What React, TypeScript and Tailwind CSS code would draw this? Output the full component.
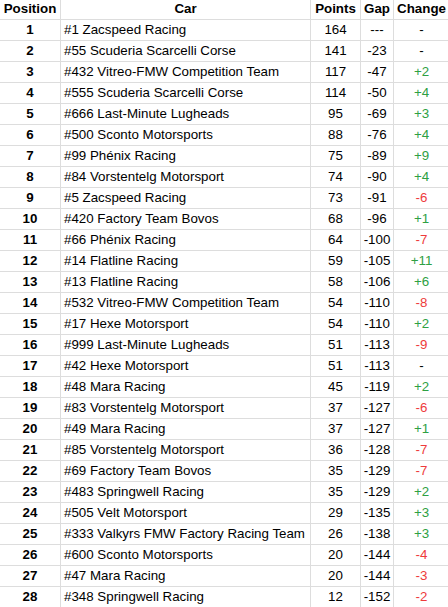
import React from 'react'

type Row = [number, string, number, string, string]

const rows: Row[] = [
  [1, '#1 Zacspeed Racing', 164, '---', '-'],
  [2, '#55 Scuderia Scarcelli Corse', 141, '-23', '-'],
  [3, '#432 Vitreo-FMW Competition Team', 117, '-47', '+2'],
  [4, '#555 Scuderia Scarcelli Corse', 114, '-50', '+4'],
  [5, '#666 Last-Minute Lugheads', 95, '-69', '+3'],
  [6, '#500 Sconto Motorsports', 88, '-76', '+4'],
  [7, '#99 Phénix Racing', 75, '-89', '+9'],
  [8, '#84 Vorstentelg Motorsport', 74, '-90', '+4'],
  [9, '#5 Zacspeed Racing', 73, '-91', '-6'],
  [10, '#420 Factory Team Bovos', 68, '-96', '+1'],
  [11, '#66 Phénix Racing', 64, '-100', '-7'],
  [12, '#14 Flatline Racing', 59, '-105', '+11'],
  [13, '#13 Flatline Racing', 58, '-106', '+6'],
  [14, '#532 Vitreo-FMW Competition Team', 54, '-110', '-8'],
  [15, '#17 Hexe Motorsport', 54, '-110', '+2'],
  [16, '#999 Last-Minute Lugheads', 51, '-113', '-9'],
  [17, '#42 Hexe Motorsport', 51, '-113', '-'],
  [18, '#48 Mara Racing', 45, '-119', '+2'],
  [19, '#83 Vorstentelg Motorsport', 37, '-127', '-6'],
  [20, '#49 Mara Racing', 37, '-127', '+1'],
  [21, '#85 Vorstentelg Motorsport', 36, '-128', '-7'],
  [22, '#69 Factory Team Bovos', 35, '-129', '-7'],
  [23, '#483 Springwell Racing', 35, '-129', '+2'],
  [24, '#505 Velt Motorsport', 29, '-135', '+3'],
  [25, '#333 Valkyrs FMW Factory Racing Team', 26, '-138', '+3'],
  [26, '#600 Sconto Motorsports', 20, '-144', '-4'],
  [27, '#47 Mara Racing', 20, '-144', '-3'],
  [28, '#348 Springwell Racing', 12, '-152', '-2'],
]

const cell = 'h-[21px] flex items-center border-r border-b border-[#dddddd]'

function changeColor(c: string) {
  if (c.startsWith('+')) return 'text-[#2ea043]'
  if (c.length > 1 && c.startsWith('-')) return 'text-[#ee3b3b]'
  return 'text-black'
}

export default function App() {
  return (
    <div className="w-[448px] h-[607px] overflow-hidden bg-white font-['Liberation_Sans',Arial,sans-serif] text-[13.33px] text-black">
      <div className="-mt-px w-[450px] grid grid-cols-[61px_250px_50px_33px_56px]">
        <div className={`${cell} justify-center font-bold`}>Position</div>
        <div className={`${cell} justify-center font-bold`}>Car</div>
        <div className={`${cell} justify-center font-bold`}>Points</div>
        <div className={`${cell} justify-center font-bold`}>Gap</div>
        <div className={`${cell} justify-center font-bold`}>Change</div>
        {rows.map(([pos, car, pts, gap, chg]) => (
          <React.Fragment key={pos}>
            <div className={`${cell} justify-center font-bold`}>{pos}</div>
            <div className={`${cell} pl-[3px] whitespace-nowrap`}>{car}</div>
            <div className={`${cell} justify-center`}>{pts}</div>
            <div className={`${cell} justify-center`}>{gap}</div>
            <div className={`${cell} justify-center ${changeColor(chg)}`}>{chg}</div>
          </React.Fragment>
        ))}
      </div>
    </div>
  )
}
